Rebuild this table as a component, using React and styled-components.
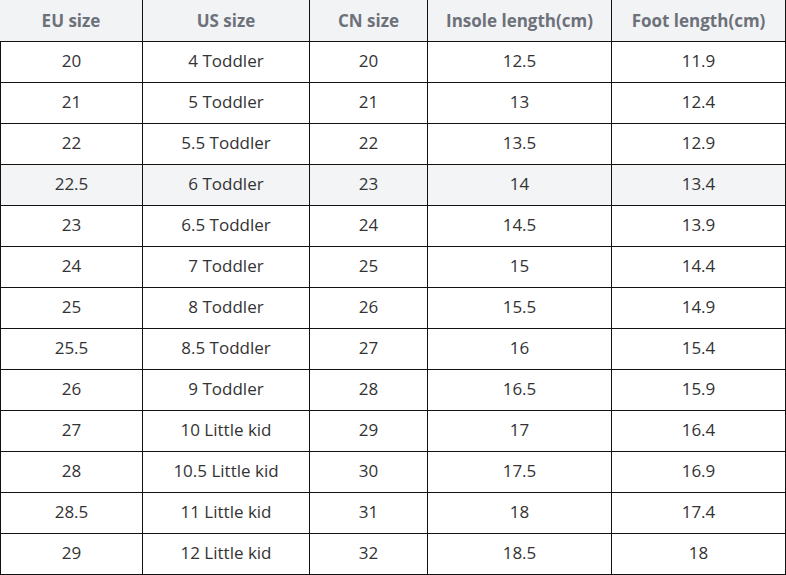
import React from 'react';
import styled, { createGlobalStyle } from 'styled-components';

const GlobalStyle = createGlobalStyle`
  html, body {
    margin: 0;
    padding: 0;
    background: #fff;
  }
  * {
    box-sizing: border-box;
  }
`;

const columns = ['EU size', 'US size', 'CN size', 'Insole length(cm)', 'Foot length(cm)'];

const rows = [
  ['20', '4 Toddler', '20', '12.5', '11.9'],
  ['21', '5 Toddler', '21', '13', '12.4'],
  ['22', '5.5 Toddler', '22', '13.5', '12.9'],
  ['22.5', '6 Toddler', '23', '14', '13.4'],
  ['23', '6.5 Toddler', '24', '14.5', '13.9'],
  ['24', '7 Toddler', '25', '15', '14.4'],
  ['25', '8 Toddler', '26', '15.5', '14.9'],
  ['25.5', '8.5 Toddler', '27', '16', '15.4'],
  ['26', '9 Toddler', '28', '16.5', '15.9'],
  ['27', '10 Little kid', '29', '17', '16.4'],
  ['28', '10.5 Little kid', '30', '17.5', '16.9'],
  ['28.5', '11 Little kid', '31', '18', '17.4'],
  ['29', '12 Little kid', '32', '18.5', '18'],
];

const SizeTable = styled.div`
  width: 786px;
  display: grid;
  grid-template-columns: 143px 167px 118px 184px 174px;
  font-family: "Open Sans", "Noto Sans", sans-serif;
`;

const HeadCell = styled.div`
  height: 42px;
  display: flex;
  align-items: center;
  justify-content: center;
  padding-bottom: 1px;
  background: #f2f3f5;
  color: #6d717a;
  font-weight: 700;
  font-size: 17px;
  border-bottom: 1px solid #111;
  border-right: 1px solid #111;
`;

const Cell = styled.div`
  height: 41px;
  display: flex;
  align-items: center;
  justify-content: center;
  padding-bottom: 3px;
  background: ${p => (p.$shade ? '#f2f4f5' : '#fff')};
  color: #333;
  font-size: 17px;
  border-bottom: 1px solid #111;
  border-right: 1px solid #111;
  border-left: ${p => (p.$first ? '1px solid #111' : 'none')};
`;

export default function App() {
  return (
    <>
      <GlobalStyle />
      <SizeTable>
        {columns.map(c => (
          <HeadCell key={c}>{c}</HeadCell>
        ))}
        {rows.map((r, i) =>
          r.map((v, j) => (
            <Cell key={i + '-' + j} $first={j === 0} $shade={i === 3}>
              {v}
            </Cell>
          ))
        )}
      </SizeTable>
    </>
  );
}
